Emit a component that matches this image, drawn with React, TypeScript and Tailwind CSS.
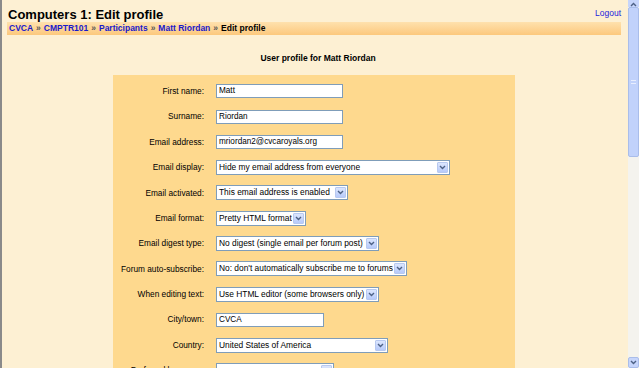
import React from 'react'

const font = { fontFamily: '"Liberation Sans", Arial, sans-serif' }

type Row =
  | { label: string; kind: 'text'; value: string; w: number }
  | { label: string; kind: 'select'; value: string; w: number }

const rows: Row[] = [
  { label: 'First name:', kind: 'text', value: 'Matt', w: 127 },
  { label: 'Surname:', kind: 'text', value: 'Riordan', w: 127 },
  { label: 'Email address:', kind: 'text', value: 'mriordan2@cvcaroyals.org', w: 127 },
  { label: 'Email display:', kind: 'select', value: 'Hide my email address from everyone', w: 234 },
  { label: 'Email activated:', kind: 'select', value: 'This email address is enabled', w: 132 },
  { label: 'Email format:', kind: 'select', value: 'Pretty HTML format', w: 90 },
  { label: 'Email digest type:', kind: 'select', value: 'No digest (single email per forum post)', w: 163 },
  { label: 'Forum auto-subscribe:', kind: 'select', value: "No: don't automatically subscribe me to forums", w: 191 },
  { label: 'When editing text:', kind: 'select', value: 'Use HTML editor (some browsers only)', w: 163 },
  { label: 'City/town:', kind: 'text', value: 'CVCA', w: 108 },
  { label: 'Country:', kind: 'select', value: 'United States of America', w: 172 },
  { label: 'Preferred language:', kind: 'select', value: '', w: 118 },
]

function Chevron({ down = true }: { down?: boolean }) {
  return (
    <svg width="7" height="5" viewBox="0 0 7 5">
      <path d={down ? 'M1 1 L3.5 3.5 L6 1' : 'M1 4 L3.5 1.5 L6 4'} stroke="#4d6185" strokeWidth="1.4" fill="none" />
    </svg>
  )
}

function Field({ row }: { row: Row }) {
  if (row.kind === 'text') {
    return (
      <div
        className="h-[14px] border border-[#7f9db9] bg-white px-[2px] text-[8.2px] leading-[12px] text-black"
        style={{ width: row.w }}
      >
        {row.value}
      </div>
    )
  }
  return (
    <div
      className="flex h-[15px] items-stretch border border-[#7f9db9] bg-white text-[8.4px] leading-[13px] text-black"
      style={{ width: row.w }}
    >
      <div className="flex-1 overflow-hidden whitespace-nowrap pl-[2px]">{row.value}</div>
      <div className="m-[1px] flex w-[11px] items-center justify-center rounded-[1px] border border-[#b8c9f0] bg-gradient-to-b from-[#dce6fd] to-[#b7cafa]">
        <Chevron />
      </div>
    </div>
  )
}

export default function App() {
  return (
    <div className="flex h-[368px] w-[639px] overflow-hidden bg-[#fdf0d3]" style={font}>
      <div className="flex flex-1 flex-col border-l-2 border-[#8a8a8a]">
        <div className="flex items-start justify-between pl-[6px] pr-[7px] pt-[7px]">
          <h1 className="text-[13px] font-bold leading-[15px] text-black">Computers 1: Edit profile</h1>
          <a className="text-[8.5px] text-[#2222dd]">Logout</a>
        </div>
        <div className="ml-[5px] mr-[7px] flex h-[15px] items-center bg-gradient-to-b from-[#fee1ad] to-[#fcc87c] pl-[2px] text-[8.5px] font-bold">
          <span className="text-[#1a1acc]">CVCA</span>
          <span className="mx-[3px] text-[#555]">»</span>
          <span className="text-[#1a1acc]">CMPTR101</span>
          <span className="mx-[3px] text-[#555]">»</span>
          <span className="text-[#1a1acc]">Participants</span>
          <span className="mx-[3px] text-[#555]">»</span>
          <span className="text-[#1a1acc]">Matt Riordan</span>
          <span className="mx-[3px] text-[#555]">»</span>
          <span className="text-black">Edit profile</span>
        </div>
        <div className="mt-[17px] pl-[6px] text-center text-[8.5px] font-bold text-black">User profile for Matt Riordan</div>
        <div className="ml-[111px] mt-[10px] w-[402px] flex-1 bg-[#fed98e] pt-[4px]">
          {rows.map(r => (
            <div key={r.label} className="flex h-[25.4px] items-center">
              <div className="w-[91px] text-right text-[8.3px] text-black">{r.label}</div>
              <div className="ml-[12px]">
                <Field row={r} />
              </div>
            </div>
          ))}
        </div>
      </div>
      <div className="flex w-[11px] flex-col bg-[#f4f3ee]">
        <div className="flex h-[7px] items-end justify-center bg-[#c6d5fb]">
          <Chevron down={false} />
        </div>
        <div className="flex h-[150px] items-center justify-center rounded-[2px] border border-[#a9bdea] bg-[#c1d2fb]">
          <div className="h-[4px] w-[5px] border-y border-[#e8eefe]" />
        </div>
        <div className="flex-1" />
        <div className="flex h-[11px] items-center justify-center rounded-[2px] border border-[#a9bdea] bg-[#c6d5fb]">
          <Chevron />
        </div>
      </div>
    </div>
  )
}
